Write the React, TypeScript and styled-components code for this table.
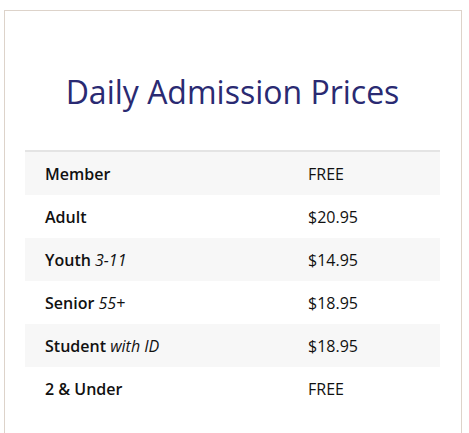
import React from "react";
import styled, { createGlobalStyle } from "styled-components";

const Global = createGlobalStyle`
  html, body { margin: 0; padding: 0; background: #ffffff; }
  body { font-family: "Open Sans", "Noto Sans", sans-serif; }
`;

const Page = styled.div`
  padding: 10px 7px 0 4px;
`;

const Card = styled.section`
  border: 1px solid #ddd3ca;
  border-bottom: none;
  background: #fff;
  padding: 56px 21px 30px 20px;
  height: 440px;
  box-sizing: border-box;
`;

const Title = styled.h2`
  margin: 0 0 33px;
  text-align: center;
  font-weight: 400;
  font-size: 32px;
  line-height: 50px;
  color: #2a2a72;
`;

const Table = styled.div`
  border-top: 2px solid #e4e4e4;
`;

const Row = styled.div<{ $shaded: boolean }>`
  display: grid;
  grid-template-columns: 263px 1fr;
  align-items: center;
  height: 43px;
  padding-left: 20px;
  background: ${(p) => (p.$shaded ? "#f7f7f7" : "#ffffff")};
  color: #111;
  font-size: 16px;
`;

const Label = styled.span`
  font-weight: 600;
  em {
    font-weight: 400;
    font-style: italic;
  }
`;

const Price = styled.span`
  font-weight: 400;
`;

const rows: { name: string; note?: string; price: string }[] = [
  { name: "Member", price: "FREE" },
  { name: "Adult", price: "$20.95" },
  { name: "Youth", note: "3-11", price: "$14.95" },
  { name: "Senior", note: "55+", price: "$18.95" },
  { name: "Student", note: "with ID", price: "$18.95" },
  { name: "2 & Under", price: "FREE" },
];

export default function App() {
  return (
    <Page>
      <Global />
      <Card>
        <Title>Daily Admission Prices</Title>
        <Table>
          {rows.map((r, i) => (
            <Row key={r.name} $shaded={i % 2 === 0}>
              <Label>
                {r.name}
                {r.note && <em> {r.note}</em>}
              </Label>
              <Price>{r.price}</Price>
            </Row>
          ))}
        </Table>
      </Card>
    </Page>
  );
}
